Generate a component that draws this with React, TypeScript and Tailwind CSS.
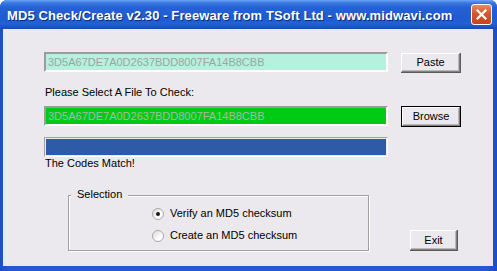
import React from "react";

const font = { fontFamily: '"Liberation Sans", Arial, sans-serif' };

function Radio({ checked, label }: { checked?: boolean; label: string }) {
  return (
    <div className="flex items-center h-[13px]">
      <div className="w-[12px] h-[12px] rounded-full border border-[#a8a8a8] bg-[linear-gradient(135deg,#dcdcdc,#ffffff_70%)] flex items-center justify-center">
        {checked && <div className="w-[4px] h-[4px] rounded-full bg-[#1a1a1a]" />}
      </div>
      <span className="ml-[6px] text-[11px] leading-[13px] text-black">{label}</span>
    </div>
  );
}

function Button({ label, def, w, h }: { label: string; def?: boolean; w: string; h: string }) {
  const inner = (
    <div className="flex-1 flex items-center justify-center border border-t-white border-l-white border-b-[#808080] border-r-[#808080] bg-[#ebe9ed] shadow-[inset_-1px_-1px_0_#b8b8b8]">
      <span className="text-[11px] leading-[13px] text-black">{label}</span>
    </div>
  );
  return (
    <div className={`${w} ${h} flex ${def ? "border border-black" : "border-b border-r border-b-[#5a5a5a] border-r-[#5a5a5a]"}`}>
      {inner}
    </div>
  );
}

export default function App() {
  return (
    <div style={font} className="w-[497px] h-[271px] bg-white">
      <div className="w-[497px] h-[271px] flex flex-col rounded-t-[7px] overflow-hidden bg-[linear-gradient(90deg,#1c4fc6,#2459d2_2%,#2459d2_98%,#1b4dc2)]">
        <div className="h-[29px] flex items-center justify-between pl-[7px] pr-[5px] bg-[linear-gradient(180deg,#6aa6f5_0%,#3b78e0_10%,#2461d6_25%,#1f5bd2_60%,#2260d4_82%,#1a49b4_100%)]">
          <span className="text-white font-bold text-[13px] leading-[15px] tracking-[0.1px] [text-shadow:1px_1px_0_#0b2a7a] pt-[1px]">
            MD5 Check/Create v2.30 - Freeware from TSoft Ltd - www.midwavi.com
          </span>
          <div className="w-[21px] h-[21px] rounded-[3px] border border-white bg-[linear-gradient(180deg,#ea8a66,#d8542c_45%,#c9431f)] flex items-center justify-center">
            <svg width="11" height="11" viewBox="0 0 11 11">
              <path d="M1.5 1.5 L9.5 9.5 M9.5 1.5 L1.5 9.5" stroke="white" strokeWidth="2.2" strokeLinecap="square" />
            </svg>
          </div>
        </div>
        <div className="flex-1 ml-[3px] mr-[4px] mb-[5px] bg-[#ebe9ed] flex flex-col pl-[41px] relative">
          <div className="mt-[23px] flex items-start">
            <div className="w-[344px] h-[20px] border-2 border-t-[#9c9c9c] border-l-[#9c9c9c] border-b-white border-r-white bg-[#b5f1dc] flex items-center pl-[2px]">
              <span className="text-[11px] leading-[13px] text-[#a2a2a2]">3D5A67DE7A0D2637BDD8007FA14B8CBB</span>
            </div>
            <div className="ml-[13px] mt-[1px]">
              <Button label="Paste" w="w-[60px]" h="h-[20px]" />
            </div>
          </div>
          <div className="mt-[13px] text-[11px] leading-[13px] text-black pl-[1px]">Please Select A File To Check:</div>
          <div className="mt-[7px] flex items-start">
            <div className="w-[344px] h-[20px] border-2 border-t-[#9c9c9c] border-l-[#9c9c9c] border-b-white border-r-white bg-[#00cb14] flex items-center pl-[2px]">
              <span className="text-[11px] leading-[13px] text-[#a8b8a8]">3D5A67DE7A0D2637BDD8007FA14B8CBB</span>
            </div>
            <div className="ml-[13px]">
              <Button label="Browse" def w="w-[60px]" h="h-[21px]" />
            </div>
          </div>
          <div className="mt-[10px] w-[344px] h-[20px] border border-t-[#a0a0a0] border-l-[#a0a0a0] border-b-white border-r-white p-[1px] pl-[1px]">
            <div className="w-full h-full bg-[#2e5ba8]" />
          </div>
          <div className="text-[11px] leading-[13px] text-black pl-[1px]">The Codes Match!</div>
          <div className="flex items-start mt-[18px]">
            <div className="ml-[24px] w-[301px] h-[56px] mt-[7px] border border-[#a0a0a0] shadow-[inset_1px_1px_0_white,1px_1px_0_white] relative">
              <div className="absolute left-[2px] top-[-8px] px-[6px] bg-[#ebe9ed] text-[11px] leading-[13px] text-black">Selection</div>
              <div className="flex flex-col gap-[9px] pl-[83px] pt-[11px]">
                <Radio checked label="Verify an MD5 checksum" />
                <Radio label="Create an MD5 checksum" />
              </div>
            </div>
            <div className="ml-[41px] mt-[42px]">
              <Button label="Exit" w="w-[48px]" h="h-[21px]" />
            </div>
          </div>
        </div>
      </div>
    </div>
  );
}
